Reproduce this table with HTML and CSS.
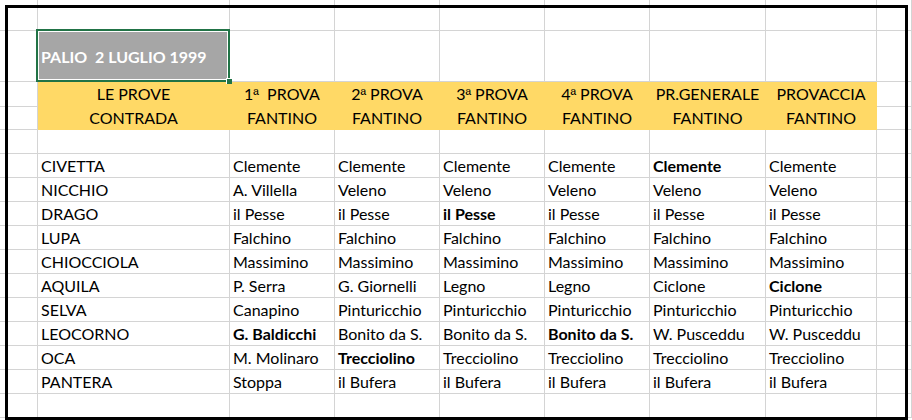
FILE: index.html
```html
<!DOCTYPE html>
<html lang="it">
<head>
<meta charset="utf-8">
<title>Palio 2 luglio 1999</title>
<link rel="stylesheet" href="styles.css">
</head>
<body>
<div class="sheet">
  <div class="row r-top">
    <div class="c"></div><div class="c"></div><div class="c"></div><div class="c"></div><div class="c"></div><div class="c"></div><div class="c"></div><div class="c"></div><div class="c"></div>
  </div>
  <div class="row r-title">
    <div class="c"></div>
    <div class="c title">PALIO  2 LUGLIO 1999<span class="sel"><span class="handle"></span></span></div>
    <div class="c"></div><div class="c"></div><div class="c"></div><div class="c"></div><div class="c"></div><div class="c"></div><div class="c"></div>
  </div>
  <div class="row">
    <div class="c"></div>
    <div class="c h">LE PROVE</div>
    <div class="c h">1<span class="ord">ª</span>  PROVA</div>
    <div class="c h">2<span class="ord">ª</span> PROVA</div>
    <div class="c h">3<span class="ord">ª</span> PROVA</div>
    <div class="c h">4<span class="ord">ª</span> PROVA</div>
    <div class="c h">PR.GENERALE</div>
    <div class="c h">PROVACCIA</div>
    <div class="c"></div>
  </div>
  <div class="row">
    <div class="c"></div>
    <div class="c h">CONTRADA</div>
    <div class="c h">FANTINO</div>
    <div class="c h">FANTINO</div>
    <div class="c h">FANTINO</div>
    <div class="c h">FANTINO</div>
    <div class="c h">FANTINO</div>
    <div class="c h">FANTINO</div>
    <div class="c"></div>
  </div>
  <div class="row">
    <div class="c"></div><div class="c"></div><div class="c"></div><div class="c"></div><div class="c"></div><div class="c"></div><div class="c"></div><div class="c"></div><div class="c"></div>
  </div>
  <div class="row">
    <div class="c"></div><div class="c">CIVETTA</div><div class="c">Clemente</div><div class="c">Clemente</div><div class="c">Clemente</div><div class="c">Clemente</div><div class="c b">Clemente</div><div class="c">Clemente</div><div class="c"></div>
  </div>
  <div class="row">
    <div class="c"></div><div class="c">NICCHIO</div><div class="c">A. Villella</div><div class="c">Veleno</div><div class="c">Veleno</div><div class="c">Veleno</div><div class="c">Veleno</div><div class="c">Veleno</div><div class="c"></div>
  </div>
  <div class="row">
    <div class="c"></div><div class="c">DRAGO</div><div class="c">il Pesse</div><div class="c">il Pesse</div><div class="c b">il Pesse</div><div class="c">il Pesse</div><div class="c">il Pesse</div><div class="c">il Pesse</div><div class="c"></div>
  </div>
  <div class="row">
    <div class="c"></div><div class="c">LUPA</div><div class="c">Falchino</div><div class="c">Falchino</div><div class="c">Falchino</div><div class="c">Falchino</div><div class="c">Falchino</div><div class="c">Falchino</div><div class="c"></div>
  </div>
  <div class="row">
    <div class="c"></div><div class="c">CHIOCCIOLA</div><div class="c">Massimino</div><div class="c">Massimino</div><div class="c">Massimino</div><div class="c">Massimino</div><div class="c">Massimino</div><div class="c">Massimino</div><div class="c"></div>
  </div>
  <div class="row">
    <div class="c"></div><div class="c">AQUILA</div><div class="c">P. Serra</div><div class="c">G. Giornelli</div><div class="c">Legno</div><div class="c">Legno</div><div class="c">Ciclone</div><div class="c b">Ciclone</div><div class="c"></div>
  </div>
  <div class="row">
    <div class="c"></div><div class="c">SELVA</div><div class="c">Canapino</div><div class="c">Pinturicchio</div><div class="c">Pinturicchio</div><div class="c">Pinturicchio</div><div class="c">Pinturicchio</div><div class="c">Pinturicchio</div><div class="c"></div>
  </div>
  <div class="row">
    <div class="c"></div><div class="c">LEOCORNO</div><div class="c b">G. Baldicchi</div><div class="c">Bonito da S.</div><div class="c">Bonito da S.</div><div class="c b">Bonito da S.</div><div class="c">W. Pusceddu</div><div class="c">W. Pusceddu</div><div class="c"></div>
  </div>
  <div class="row">
    <div class="c"></div><div class="c">OCA</div><div class="c">M. Molinaro</div><div class="c b">Trecciolino</div><div class="c">Trecciolino</div><div class="c">Trecciolino</div><div class="c">Trecciolino</div><div class="c">Trecciolino</div><div class="c"></div>
  </div>
  <div class="row">
    <div class="c"></div><div class="c">PANTERA</div><div class="c">Stoppa</div><div class="c">il Bufera</div><div class="c">il Bufera</div><div class="c">il Bufera</div><div class="c">il Bufera</div><div class="c">il Bufera</div><div class="c"></div>
  </div>
  <div class="row">
    <div class="c"></div><div class="c"></div><div class="c"></div><div class="c"></div><div class="c"></div><div class="c"></div><div class="c"></div><div class="c"></div><div class="c"></div>
  </div>
</div>
<div class="frame"></div>
</body>
</html>
```
FILE: styles.css
```css
html, body {
  margin: 0;
  padding: 0;
  background: #ffffff;
}

body {
  width: 912px;
  height: 420px;
  overflow: hidden;
  position: relative;
  font-family: "Lato", "Open Sans", "Liberation Sans", sans-serif;
  font-size: 16px;
  color: #000000;
}

.sheet {
  display: flex;
  flex-direction: column;
}

.row {
  display: grid;
  grid-template-columns: 38px 192px 105px 105px 105px 105px 116px 111px 1fr;
  height: 24px;
}

.r-top {
  height: 31px;
}

.r-title {
  height: 51px;
}

.c {
  box-sizing: border-box;
  border-right: 1px solid #d4d4d4;
  border-bottom: 1px solid #d4d4d4;
  padding-left: 3px;
  line-height: 23px;
  white-space: pre;
  overflow: visible;
  position: relative;
}

.b {
  font-weight: 700;
}

.h {
  background: #ffd966;
  border-right-color: #ffd966;
  border-bottom-color: #ffd966;
  text-align: center;
  padding-left: 0;
}

.ord {
  font-family: "Liberation Sans", "DejaVu Sans", sans-serif;
  font-size: 15px;
}

.title {
  background: #a6a6a6;
  color: #ffffff;
  font-weight: 700;
  display: flex;
  align-items: center;
  border-color: #a6a6a6;
}

.sel {
  position: absolute;
  left: -2px;
  top: -2px;
  right: -1px;
  bottom: -1px;
  border: 2px solid #217346;
  box-shadow: inset 0 0 0 1px #ffffff;
  z-index: 2;
}

.handle {
  position: absolute;
  right: -4px;
  bottom: -4px;
  width: 5px;
  height: 5px;
  background: #217346;
  border: 1px solid #ffffff;
  border-right: 0;
  border-bottom: 0;
}

.frame {
  position: absolute;
  left: 5px;
  top: 5px;
  width: 903px;
  height: 415px;
  box-sizing: border-box;
  border: 3px solid #000000;
  z-index: 3;
}
```
